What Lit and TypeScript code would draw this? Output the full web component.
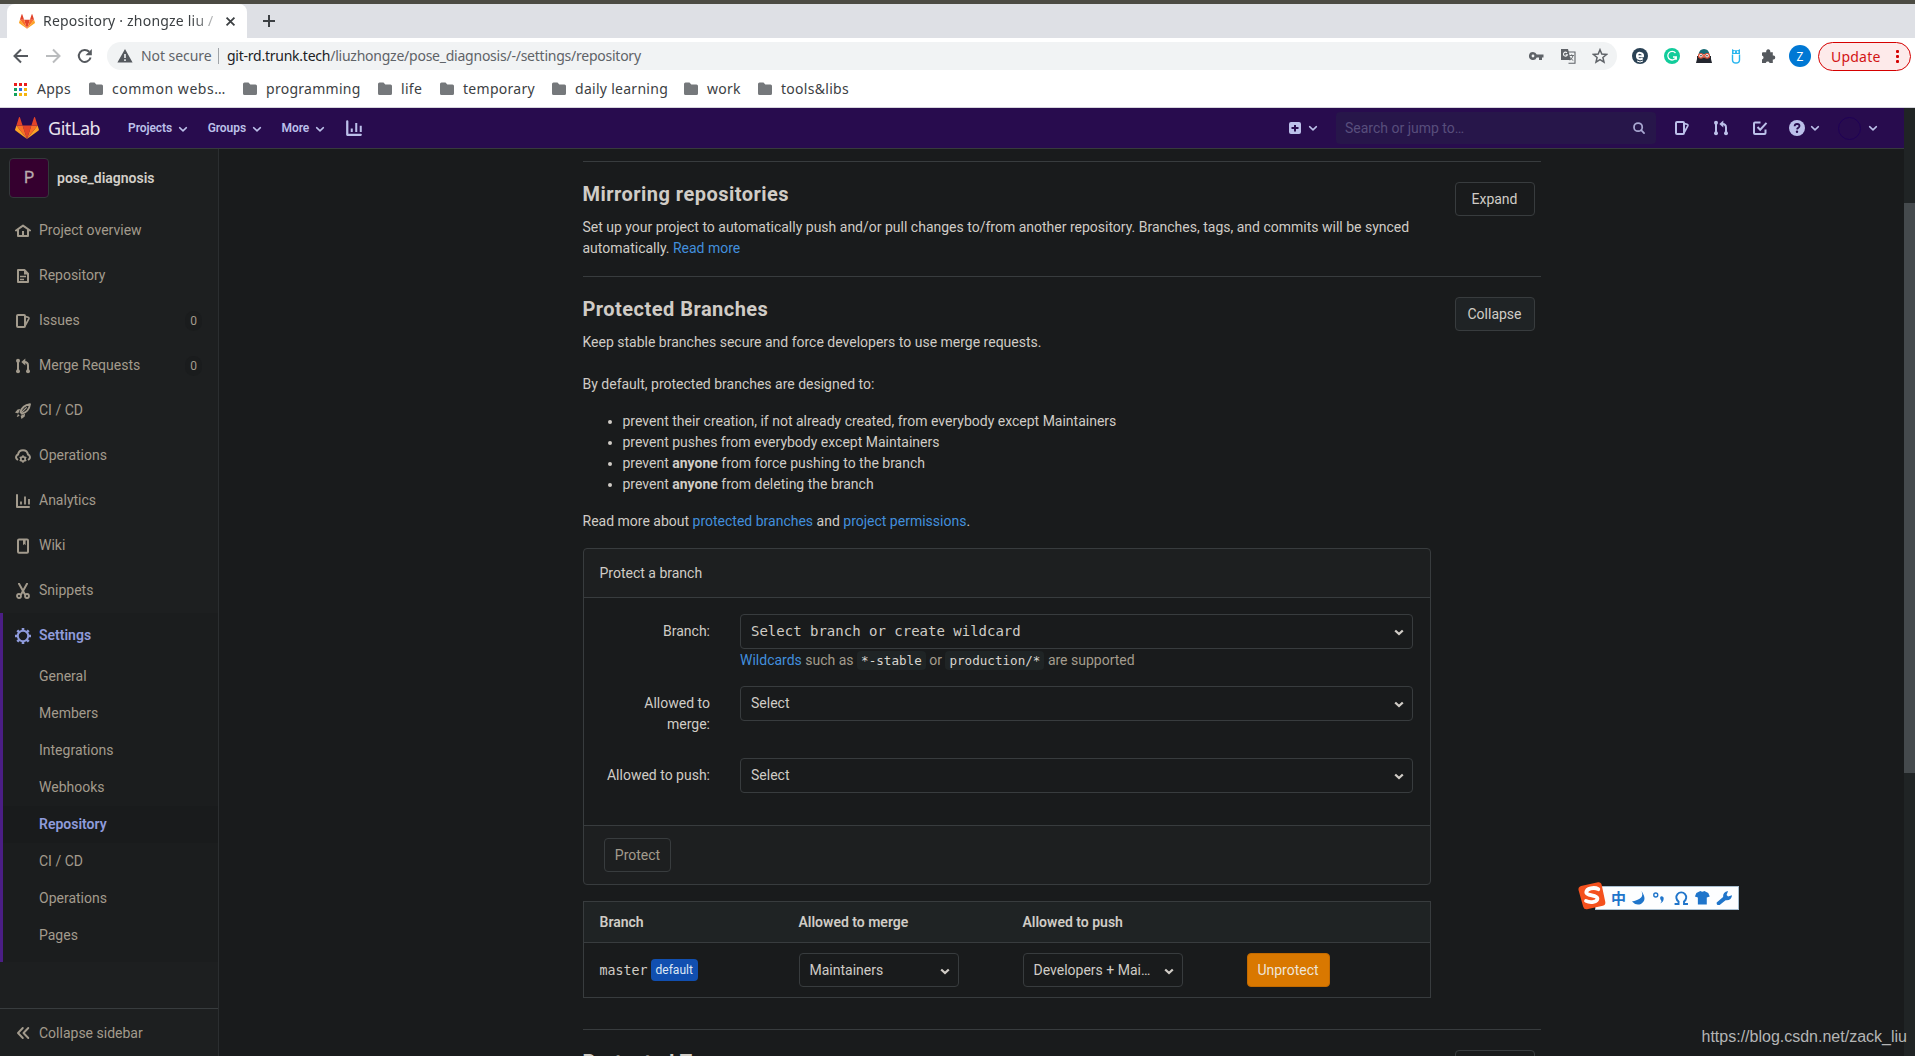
import { LitElement, html, css, svg, nothing, TemplateResult } from "lit";
import { customElement, property } from "lit/decorators.js";
import { classMap } from "lit/directives/class-map.js";

const GLYPHS: Record<string, TemplateResult> = {
  home: svg`<path d="M1 7.5 8 2.6l7 4.9M3 6.8V13h10V6.8" fill="none" stroke="currentColor" stroke-width="2" stroke-linejoin="round" stroke-linecap="round"/><rect x="7" y="8" width="2" height="5" fill="currentColor"/>`,
  doc: svg`<path d="M3 2h6.4L13 5.6V14H3z" fill="none" stroke="currentColor" stroke-width="2" stroke-linejoin="round"/><path d="M9 1.500l5 5H9z" fill="currentColor"/><path d="M5 8.500h6M5 11.500h4" stroke="currentColor" stroke-width="1.400"/>`,
  issues: svg`<path d="M2 3a1 1 0 0 1 1-1h6a1 1 0 0 1 1 1v10a1 1 0 0 1-1 1H3a1 1 0 0 1-1-1z" fill="none" stroke="currentColor" stroke-width="2"/><path d="M10.500 3.600l2.600.7q1.200.4.7 1.500L10.500 12" fill="none" stroke="currentColor" stroke-width="1.700" stroke-linejoin="round"/>`,
  merge: svg`<path d="M3 3v10M13 13V7.500Q13 4 9.500 4H8.500" fill="none" stroke="currentColor" stroke-width="2"/><path d="M10.300.6v6.800L6.300 4z" fill="currentColor"/><circle cx="3" cy="2.800" r="2" fill="currentColor"/><circle cx="3" cy="13.200" r="2" fill="currentColor"/><circle cx="13" cy="13.200" r="2" fill="currentColor"/>`,
  rocket: svg`<path d="M5.500 9.200C6.500 5 10 1.800 15 1.200 14.500 6 11.200 9.800 6.900 10.700z" fill="none" stroke="currentColor" stroke-width="1.900" stroke-linejoin="round"/><path d="M11.700 4.300 6 10" stroke="currentColor" stroke-width="1.200"/><path d="M0 9.500 2.600 6.400l2.600-.4-2 4.500zM6.500 16l3.200-2.600.4-2.700-4.500 2zM3 11l1.700 1.700L2 14l-.2-.2z" fill="currentColor"/>`,
  cloud: svg`<path d="M2.300 11.500A2.800 2.800 0 0 1 3 6.500C3.500 3.700 5.600 2.200 8 2.200s4.500 1.500 5 4.300a2.800 2.800 0 0 1 .7 5" fill="none" stroke="currentColor" stroke-width="2" stroke-linecap="round"/><circle cx="8" cy="11" r="2.200" fill="none" stroke="currentColor" stroke-width="1.700"/><path d="M8 7.200v1.500M8 13.300v1.500M4.700 9.100l1.300.8M10 12.100l1.300.8M4.700 12.900l1.300-.8M10 9.900l1.300-.8" stroke="currentColor" stroke-width="1.500"/>`,
  chart: svg`<path d="M2 2v12h12" fill="none" stroke="currentColor" stroke-width="2" stroke-linecap="round" stroke-linejoin="round"/><path d="M6 8.500v3M10 3.500v8M14 6v5.500" stroke="currentColor" stroke-width="1.800"/>`,
  book: svg`<rect x="3" y="1.500" width="10" height="13.200" rx="1" fill="none" stroke="currentColor" stroke-width="2"/><path d="M8 1h2.600v6.300L9.300 6 8 7.300z" fill="currentColor"/>`,
  scissors: svg`<path d="M4 .8 9.700 11M12 .8 6.300 11" stroke="currentColor" stroke-width="2" stroke-linecap="round"/><circle cx="4" cy="13" r="2" fill="none" stroke="currentColor" stroke-width="1.800"/><circle cx="12" cy="13" r="2" fill="none" stroke="currentColor" stroke-width="1.800"/>`,
  gear: svg`<circle cx="8" cy="8" r="5.200" fill="none" stroke="currentColor" stroke-width="2"/><path d="M8 0v3M8 13v3M0 8h3M13 8h3M2.300 2.300l2 2M11.700 11.700l2 2M2.300 13.700l2-2M11.700 4.300l2-2" stroke="currentColor" stroke-width="2.600"/>`,
  collapse: svg`<path d="M7.800 3 3 8l4.800 5M13.300 3 8.500 8l4.800 5" fill="none" stroke="currentColor" stroke-width="1.900" stroke-linecap="round" stroke-linejoin="round"/>`,
  chevron: svg`<path d="M3.500 6.200 8 10.500l4.500-4.300" fill="none" stroke="currentColor" stroke-width="2" stroke-linecap="round" stroke-linejoin="round"/>`,
  caret: svg`<path d="M4.200 6.500 8 10l3.800-3.500" fill="none" stroke="currentColor" stroke-width="2.300"/>`,
  plus: svg`<path fill-rule="evenodd" d="M4 2h8a2 2 0 0 1 2 2v8a2 2 0 0 1-2 2H4a2 2 0 0 1-2-2V4a2 2 0 0 1 2-2zm3 3v2H4.500v2H7v2.500h2V9h2.500V7H9V5z" fill="currentColor"/>`,
  search: svg`<circle cx="7" cy="7" r="4.700" fill="none" stroke="currentColor" stroke-width="2"/><path d="m10.500 10.500 3.300 3.300" stroke="currentColor" stroke-width="2" stroke-linecap="round"/>`,
  todo: svg`<path d="M8.500 2.500H3a1 1 0 0 0-1 1V13a1 1 0 0 0 1 1h9.500a1 1 0 0 0 1-1V9.500" fill="none" stroke="currentColor" stroke-width="2"/><path d="m5.500 7 2.700 2.700L14.500 2.800" fill="none" stroke="currentColor" stroke-width="2"/>`,
  help: svg`<circle cx="8" cy="8" r="8" fill="currentColor"/><path d="M5.600 6.300C5.700 4.800 6.700 4 8.100 4c1.400 0 2.400.8 2.400 2 0 1.700-2.300 1.800-2.400 3.400" fill="none" stroke="#280c4e" stroke-width="1.800"/><circle cx="8" cy="11.800" r="1.200" fill="#280c4e"/>`,
  back: svg`<path d="M15 8H2M8 1.500 1.500 8 8 14.500" fill="none" stroke="currentColor" stroke-width="2"/>`,
  forward: svg`<path d="M1 8h13M8 1.500 14.500 8 8 14.500" fill="none" stroke="currentColor" stroke-width="2"/>`,
  reload: svg`<path d="M13.600 9.500A6 6 0 1 1 12.200 3.800" fill="none" stroke="currentColor" stroke-width="2"/><path d="M14.800 1v6.300H8.500z" fill="currentColor"/>`,
  warning: svg`<path fill-rule="evenodd" d="M8 1 15.600 14.500H.4zM7.200 6v4h1.600V6zm0 5.200v1.700h1.600v-1.700z" fill="currentColor"/>`,
  folder: svg`<path d="M1 3q0-1.500 1.500-1.500h4L8.300 3.500h5.200Q15 3.500 15 5v7.500q0 1.500-1.500 1.500h-11Q1 14 1 12.500z" fill="currentColor"/>`,
  close: svg`<path d="m3.800 3.800 8.400 8.400M12.200 3.800l-8.400 8.400" stroke="currentColor" stroke-width="1.900"/>`,
  add: svg`<path d="M8 2v12M2 8h12" stroke="currentColor" stroke-width="2"/>`,
  key: svg`<path fill-rule="evenodd" d="M5 4a4 4 0 1 0 3.700 5.400H11V12h3V9.400h1.500V6.600H8.700A4 4 0 0 0 5 4zm0 2.600a1.400 1.400 0 1 1 0 2.800 1.400 1.400 0 0 1 0-2.800z" fill="currentColor"/>`,
  star: svg`<path d="m8 1.700 1.800 4.400 4.700.4-3.600 3 1.100 4.600L8 11.700l-4 2.400 1.100-4.600-3.600-3 4.700-.4z" fill="none" stroke="currentColor" stroke-width="1.500"/>`,
  translate: svg`<path d="M6 4h9v11.300H8.500" fill="none" stroke="currentColor" stroke-width="1.100"/><path d="M1 1h7l2.700 11H1z" fill="currentColor"/><path d="M7 4.800a2 2 0 1 0 .4 2H5.600" fill="none" stroke="#f1f3f4" stroke-width="1.100"/><path d="M9.300 7.500H14M11.700 6.400v1M10 9.300q1 2 3.300 3.200M13 7.600q-.6 2.700-3 4.700" fill="none" stroke="currentColor" stroke-width=".9"/>`,
  puzzle: svg`<path d="M3 4.200h3.300a2.100 2.100 0 1 1 3.900 0h2.600V7.600a2 2 0 1 1 0 3.900V15H9.600a2 2 0 0 0-3.800 0H2v-3.500a2 2 0 0 0 0-3.900V5.200a1 1 0 0 1 1-1z" fill="currentColor"/>`,
};

const icon = (name: string, size = 16) =>
  html`<svg class="icon" width=${size} height=${size} viewBox="0 0 16 16" aria-hidden="true">${GLYPHS[name]}</svg>`;

const tanuki = (w: number, h: number) => html`<svg class="icon" width=${w} height=${h} viewBox="0 0 24 22">
  <path d="M12 22 16.400 8.400H7.600z" fill="#e24329"/>
  <path d="M12 22 7.600 8.400H1.400zM12 22l4.400-13.600h6.200z" fill="#fc6d26"/>
  <path d="M1.400 8.400.1 12.500a.9.9 0 0 0 .3 1L12 22zM22.600 8.400l1.300 4.100a.9.9 0 0 1-.3 1L12 22z" fill="#fca326"/>
  <path d="M1.400 8.400h6.200L4.900.3a.5.5 0 0 0-.9 0zM22.600 8.400h-6.200L19.100.3a.5.5 0 0 1 .9 0z" fill="#e24329"/>
</svg>`;

const base = css`
  * { box-sizing: border-box; }
  .icon { display: block; flex: none; }
`;

@customElement("browser-chrome")
class BrowserChrome extends LitElement {
  static styles = [base, css`
    :host { display: block; height: 108px; background: #fff; color: #3c4043; font: 14px "Noto Sans", sans-serif; border-bottom: 1px solid #d6d5dc; }
    .edge { height: 4px; background: #4c4b43; }
    .tabs { height: 34px; background: #dee0e5; display: flex; align-items: center; padding-left: 7px; }
    .tab { width: 240px; height: 34px; background: #fff; border-radius: 8px 8px 0 0; display: flex; align-items: center; padding-left: 12px; }
    .title { width: 172px; margin-left: 8px; white-space: nowrap; overflow: hidden; font-size: 14px; letter-spacing: 0.200px; line-height: 20px; -webkit-mask-image: linear-gradient(90deg, #000 148px, transparent 182px); mask-image: linear-gradient(90deg, #000 148px, transparent 182px); }
    .x { margin-left: 8px; }
    .new { margin-left: 14px; }
    .bar { height: 36px; display: flex; align-items: center; padding: 0 4px 0 13px; color: #55595e; }
    .nav { display: flex; gap: 16px; width: 94px; }
    .fwd { color: #babcbe; }
    .omni { width: 1511px; height: 28px; border-radius: 14px; background: #f1f3f4; display: flex; align-items: center; padding: 0 9px 0 10px; white-space: nowrap; }
    .secure { margin: 0 0 2px 8px; width: 77px; color: #5f6368; letter-spacing: -0.050px; }
    .rule { width: 1px; height: 16px; background: #a0a4a8; margin-right: 8px; }
    .url { flex: 1; color: #5f6368; letter-spacing: -0.240px; margin-bottom: 2px; }
    .host { color: #202124; }
    .acts { display: flex; gap: 16px; color: #5f6368; }
    .exts { display: flex; align-items: center; gap: 16px; margin-left: 15px; }
    .avatar { width: 22px; height: 22px; border-radius: 50%; background: #0078d4; color: #fff; display: grid; place-items: center; font-size: 12px; margin-left: -3px; }
    .update { margin-left: 7px; width: 93px; height: 29px; border: 1px solid #d50000; border-radius: 15px; background: #fdeaea; color: #d21414; display: flex; align-items: center; padding-left: 12px; gap: 15px; letter-spacing: 0.200px; }
    .dots { display: grid; gap: 2px; }
    .dot { width: 3px; height: 3px; border-radius: 1px; background: #d50000; }
    .marks { height: 32px; margin-top: -1px; display: flex; align-items: center; padding-left: 14px; color: #3c4043; }
    .apps { width: 75px; display: flex; align-items: center; gap: 10px; }
    .grid { width: 13px; display: grid; grid-template-columns: repeat(3, 3px); gap: 2px; }
    .sq { height: 3px; }
    .red { background: #ea1c1c; } .green { background: #12a15c; } .blue { background: #2f6fe0; } .amber { background: #f5b50f; }
    .mark { display: flex; align-items: center; gap: 8px; white-space: nowrap; color: #75787b; margin-left: -1px; margin-right: 1px; }
    .label { color: #3c4043; letter-spacing: 0.280px; margin-bottom: 2px; }
    .label.wide { letter-spacing: 0.530px; }
  `];
  marks: [string, number][] = [
    ["common webs…", 154], ["programming", 135], ["life", 62], ["temporary", 112],
    ["daily learning", 132], ["work", 74], ["tools&libs", 92],
  ];
  render() {
    const colors = ["red", "red", "red", "green", "blue", "amber", "green", "amber", "amber"];
    return html`
      <div class="edge"></div>
      <div class="tabs">
        <div class="tab">${tanuki(16, 15)}<span class="title">Repository · zhongze liu / </span><span class="x">${icon("close", 15)}</span></div>
        <span class="new">${icon("add", 16)}</span>
      </div>
      <div class="bar">
        <div class="nav">${icon("back")}<span class="fwd">${icon("forward")}</span>${icon("reload")}</div>
        <div class="omni">
          ${icon("warning")}<span class="secure">Not secure</span><span class="rule"></span>
          <span class="url"><span class="host">git-rd.trunk.tech</span>/liuzhongze/pose_diagnosis/-/settings/repository</span>
          <div class="acts">${icon("key")}${icon("translate")}${icon("star")}</div>
        </div>
        <div class="exts">
          <svg class="icon" width="16" height="16" viewBox="0 0 16 16"><circle cx="8" cy="8" r="8" fill="#2b4255"/><path d="M4.800 8.300h6.200A3 3 0 0 0 5 7.500C4.700 11 8 12 10.700 10.300" fill="none" stroke="#fff" stroke-width="2"/><path d="M5 13q3 2 6 0" stroke="#fff" fill="none"/></svg>
          <svg class="icon" width="16" height="16" viewBox="0 0 16 16"><circle cx="8" cy="8" r="8" fill="#11cc9b"/><path d="M11.500 5A4.300 4.300 0 1 0 12.200 9H9M12.300 9v2.800" fill="none" stroke="#fff" stroke-width="1.300"/></svg>
          <svg class="icon" width="16" height="16" viewBox="0 0 16 16"><path d="M2.500 7Q3 1 8 1t5.500 6z" fill="#176a74"/><path d="M1 8h14v3l1 4H0l1-4z" fill="#23262e"/><path d="M2.500 6h11v3.500h-11z" fill="#f3af9b"/><circle cx="4.900" cy="7.800" r="2.300" fill="#fff" stroke="#d94c32" stroke-width="1.200"/><circle cx="11.100" cy="7.800" r="2.300" fill="#fff" stroke="#d94c32" stroke-width="1.200"/><circle cx="5" cy="7.800" r=".8" fill="#222"/><circle cx="11" cy="7.800" r=".8" fill="#222"/></svg>
          <svg class="icon" width="16" height="16" viewBox="0 0 16 16"><path d="M4.500 6.500V12Q4.500 15 8 15t3.500-3V6.500" fill="none" stroke="#27b5ee" stroke-width="1.400"/><path d="M4 1l2 1.200h4L12 1v5H4z" fill="#27b5ee"/><circle cx="6.300" cy="4" r=".9" fill="#fff"/><circle cx="9.700" cy="4" r=".9" fill="#fff"/></svg>
          <span>${icon("puzzle")}</span>
          <span class="avatar">Z</span>
        </div>
        <div class="update">Update<span class="dots"><span class="dot"></span><span class="dot"></span><span class="dot"></span></span></div>
      </div>
      <div class="marks">
        <div class="apps"><span class="grid">${colors.map((c) => html`<span class="sq ${c}"></span>`)}</span><span class="label">Apps</span></div>
        ${this.marks.map(([t, w], i) => html`<div class="mark" style="width:${w}px">${icon("folder")}<span class=${classMap({ label: true, wide: i === 0 })}>${t}</span></div>`)}
      </div>`;
  }
}

@customElement("top-nav")
class TopNav extends LitElement {
  static styles = [base, css`
    :host { display: flex; align-items: center; height: 41px; background: #280c4e; border-bottom: 1px solid #373b3d; padding-left: 15px; color: #bcc0ea; font: 14px Roboto, sans-serif; }
    .brand { font: 18px/24px "Noto Sans", sans-serif; letter-spacing: -0.450px; color: #e8e4ee; margin-left: 9px; width: 80px; }
    .menu { display: flex; align-items: center; gap: 5px; font-size: 12px; font-weight: 600; margin-right: 18.500px; letter-spacing: -0.060px; }
    .menu svg { margin-top: 1px; }
    .plus { margin-left: auto; width: 49px; display: flex; align-items: center; gap: 4px; }
    .search { width: 320px; height: 32px; border-radius: 4px; background: #27164a; color: #584e7c; display: flex; align-items: center; justify-content: space-between; padding: 0 10px 0 9px; }
    .search svg { color: #a9a8d2; }
    .right { width: 248px; display: flex; align-items: center; padding-left: 18px; }
    .cell { width: 39px; }
    .cell.todo { width: 37px; }
    .help { display: flex; align-items: center; gap: 4px; width: 49px; }
    .user { display: flex; align-items: center; gap: 6px; }
    .ring { width: 23px; height: 23px; border-radius: 50%; border: 1px solid #1f0056; }
  `];
  render() {
    return html`
      ${tanuki(24, 22)}<span class="brand">GitLab</span>
      ${["Projects", "Groups", "More"].map((m) => html`<span class="menu">${m}${icon("chevron", 12)}</span>`)}
      <span>${icon("chart", 18)}</span>
      <span class="plus">${icon("plus")}${icon("chevron", 12)}</span>
      <div class="search"><span>Search or jump to…</span>${icon("search", 14)}</div>
      <div class="right">
        <span class="cell">${icon("issues")}</span><span class="cell">${icon("merge")}</span><span class="cell todo">${icon("todo")}</span>
        <span class="help">${icon("help")}${icon("chevron", 12)}</span>
        <span class="user"><span class="ring"></span>${icon("chevron", 12)}</span>
      </div>`;
  }
}

@customElement("side-nav")
class SideNav extends LitElement {
  static styles = [base, css`
    :host { display: flex; flex-direction: column; width: 219px; flex: none; background: #1d1f20; border-right: 1px solid #2b2e30; font: 14px Roboto, sans-serif; color: #a39b8d; }
    .project { height: 59px; display: flex; align-items: flex-start; padding: 9px 0 0 9px; gap: 8px; color: #d3cfc9; font-weight: 600; line-height: 40px; }
    .tile { width: 40px; height: 40px; border: 1px solid #33383a; border-radius: 4px; background: #35002f; color: #b9aeae; text-align: center; font-size: 16px; font-weight: 400; line-height: 37px; -webkit-text-stroke: 0.300px; }
    .row { height: 45px; display: flex; align-items: center; padding: 0 16px 0 15px; gap: 8px; }
    .row svg { margin-top: 1px; }
    .name { margin-bottom: 1px; }
    .row .count { margin-left: auto; width: 17px; height: 20px; border-radius: 9px; background: #1a1c1d; font-size: 12px; line-height: 20px; text-align: center; }
    .open { border-left: 3px solid #4b1e85; background: #1b1d1e; padding-bottom: 8px; }
    .open .row { padding-left: 12px; }
    .on { color: #8f9bdb; font-weight: 600; }
    .sub { height: 37px; line-height: 37px; padding-left: 36px; }
    .sub.on { background: #191b1c; }
    .foot { margin-top: auto; height: 48px; border-top: 1px solid #383c3e; }
    .foot .row { height: 47px; }
  `];
  rows: [string, string, boolean][] = [
    ["home", "Project overview", false], ["doc", "Repository", false], ["issues", "Issues", true], ["merge", "Merge Requests", true],
    ["rocket", "CI / CD", false], ["cloud", "Operations", false], ["chart", "Analytics", false], ["book", "Wiki", false], ["scissors", "Snippets", false],
  ];
  render() {
    const subs = ["General", "Members", "Integrations", "Webhooks", "Repository", "CI / CD", "Operations", "Pages"];
    return html`
      <div class="project"><span class="tile">P</span>pose_diagnosis</div>
      ${this.rows.map(([g, t, n]) => html`<div class="row">${icon(g)}<span class="name">${t}</span>${n ? html`<span class="count">0</span>` : nothing}</div>`)}
      <div class="open">
        <div class="row on">${icon("gear")}<span class="name">Settings</span></div>
        ${subs.map((s) => html`<div class=${classMap({ sub: true, on: s === "Repository" })}>${s}</div>`)}
      </div>
      <div class="foot"><div class="row">${icon("collapse")}<span>Collapse sidebar</span></div></div>`;
  }
}

@customElement("drop-select")
class DropSelect extends LitElement {
  @property() label = "";
  static styles = [base, css`
    :host { display: flex; align-items: center; justify-content: space-between; border: 1px solid #383c3e; border-radius: 4px; background: #191b1c; padding: 0 5px 0 10px; color: #d0ccc6; }
    svg { margin-top: 1px; }
  `];
  render() {
    return html`<span>${this.label}</span>${icon("caret")}`;
  }
}

@customElement("settings-page")
class SettingsPage extends LitElement {
  static styles = [base, css`
    :host { display: block; flex: 1; overflow: hidden; background: #191b1c; color: #d0ccc6; font: 14px/21px Roboto, sans-serif; padding: 12px 0 0 363.500px; }
    .section { width: 958px; border-top: 1px solid #383c3e; padding: 20px 6px 17px 0; display: grid; grid-template-columns: 848px 80px; justify-content: space-between; }
    .section.last { height: 60px; }
    .section.main { padding-bottom: 31px; }
    h4 { margin: 0 0 11px; font-size: 20px; line-height: 24px; font-weight: 700; letter-spacing: 0.470px; }
    p { margin: 0; }
    .gap { margin-top: 21px; }
    a { color: #428fdc; text-decoration: none; }
    ul { margin: 16px 0; padding-left: 40px; }
    b { font-weight: 700; }
    .btn { height: 34px; border: 1px solid #383c3e; border-radius: 4px; display: grid; place-items: center; line-height: 20px; }
    .btn.pressed { background: #1f2325; }
    .card { margin-top: 16px; border: 1px solid #383c3e; border-radius: 4px; background: #1d1f20; height: 337px; display: flex; flex-direction: column; }
    .head { height: 49px; flex: none; padding: 14px 16px 13px; border-bottom: 1px solid #383c3e; }
    .form { flex: 1; min-height: 0; background: #191b1c; padding: 16px 17px 0 16.500px; }
    .field { height: 72px; display: grid; grid-template-columns: 110px 1fr; column-gap: 30px; }
    .name { text-align: right; padding-top: 6.500px; }
    .field drop-select { height: 35px; }
    .hint { color: #a39b8d; margin-top: 1px; }
    .mono { font-family: "DejaVu Sans Mono", monospace; }
    code { font: 12.600px "DejaVu Sans Mono", monospace; background: #1f2425; color: #d9d5cf; padding: 2px 4px; border-radius: 4px; }
    .foot { height: 59px; flex: none; border-top: 1px solid #383c3e; padding: 12px 20.500px; }
    .foot .btn { width: 67px; color: #a39b8d; }
    .table { margin-top: 16px; border: 1px solid #383c3e; }
    .tr { display: grid; grid-template-columns: 199px 224px 224px 1fr; padding-left: 16px; align-items: center; height: 54px; }
    .tr.th { height: 41px; background: #1f2324; border-bottom: 1px solid #383c3e; font-weight: 600; }
    .tr drop-select { width: 160px; height: 34px; }
    .branch { display: flex; align-items: center; gap: 3px; }
    .branch .mono { font-size: 13.300px; }
    .badge { font: 12px/22px Roboto, sans-serif; background: #114fb0; color: #dfe8f5; border-radius: 4px; padding: 0 5px; }
    .warn { width: 83px; background: #d97800; border-color: #c26a00; color: #eee5da; }
  `];
  render() {
    return html`
      <div class="section">
        <div><h4>Mirroring repositories</h4>
          <p>Set up your project to automatically push and/or pull changes to/from another repository. Branches, tags, and commits will be synced automatically. <a>Read more</a></p></div>
        <div class="btn">Expand</div>
      </div>
      <div class="section main">
        <div>
          <h4>Protected Branches</h4>
          <p>Keep stable branches secure and force developers to use merge requests.</p>
          <p class="gap">By default, protected branches are designed to:</p>
          <ul>
            <li>prevent their creation, if not already created, from everybody except Maintainers</li>
            <li>prevent pushes from everybody except Maintainers</li>
            <li>prevent <b>anyone</b> from force pushing to the branch</li>
            <li>prevent <b>anyone</b> from deleting the branch</li>
          </ul>
          <p>Read more about <a>protected branches</a> and <a>project permissions</a>.</p>
          <div class="card">
            <div class="head">Protect a branch</div>
            <div class="form">
              <div class="field"><span class="name">Branch:</span><div><drop-select class="mono" label="Select branch or create wildcard"></drop-select>
                <div class="hint"><a>Wildcards</a> such as <code>*-stable</code> or <code>production/*</code> are supported</div></div></div>
              <div class="field"><span class="name">Allowed to<br>merge:</span><drop-select label="Select"></drop-select></div>
              <div class="field"><span class="name">Allowed to push:</span><drop-select label="Select"></drop-select></div>
            </div>
            <div class="foot"><div class="btn">Protect</div></div>
          </div>
          <div class="table">
            <div class="tr th"><span>Branch</span><span>Allowed to merge</span><span>Allowed to push</span></div>
            <div class="tr">
              <span class="branch"><span class="mono">master</span><span class="badge">default</span></span>
              <drop-select label="Maintainers"></drop-select>
              <drop-select label="Developers + Mai…"></drop-select>
              <span class="btn warn">Unprotect</span>
            </div>
          </div>
        </div>
        <div class="btn pressed">Collapse</div>
      </div>
      <div class="section last"><h4>Protected Tags</h4><div class="btn">Expand</div></div>`;
  }
}

@customElement("app-root")
class AppRoot extends LitElement {
  static styles = [base, css`
    :host { display: block; position: relative; width: 1915px; height: 1056px; overflow: hidden; background: #191b1c; }
    .view { display: flex; height: 948px; }
    .app { width: 1904px; display: flex; flex-direction: column; }
    .body { flex: 1; display: flex; min-height: 0; }
    .track { width: 11px; background: #202425; padding-top: 95px; }
    .thumb { height: 570px; background: #454a4d; }
    .ime { position: absolute; left: 1578px; top: 881px; display: flex; align-items: center; }
    .tray { width: 144px; height: 24px; margin: 4px 0 0 -12px; background: #fdfeff; border: 1px solid #a9bfd0; display: flex; align-items: center; padding-left: 15px; }
    .logo { z-index: 1; }
    .zh { font: 700 15px/22px "Noto Sans CJK SC", sans-serif; color: #1f75cb; width: 20px; }
    .mark { position: absolute; left: 1701.500px; top: 1027px; font: 16px/20px "Liberation Sans", Arial, sans-serif; color: #b4b5b5; white-space: nowrap; }
  `];
  render() {
    return html`
      <browser-chrome></browser-chrome>
      <div class="view">
        <div class="app"><top-nav></top-nav><div class="body"><side-nav></side-nav><settings-page></settings-page></div></div>
        <div class="track"><div class="thumb"></div></div>
      </div>
      <div class="ime">
        <svg class="icon logo" width="29" height="29" viewBox="0 0 29 29"><path d="M3 5 20 1.200Q23 .8 23.700 4L27.300 21q.5 3-2.500 3.800L9 28.300q-3 .4-3.800-2.500L.5 9Q0 6 3 5z" fill="#f4511e"/><path d="M20.300 8.200C16 5.700 8.500 7.500 8.300 11.200c-.1 4 11 2.200 11.100 6.200.1 3.700-7 4.700-11.400 2.500" fill="none" stroke="#fff" stroke-width="3.800" stroke-linecap="round"/></svg>
        <div class="tray">
          <span class="zh">中</span>
          <svg class="icon" width="105" height="18" viewBox="0 0 106 18" fill="#1f75cb"><path d="M10.500 2Q14.500 10 1 12.500 5 17 10 15 17 11 10.500 2z"/><circle cx="25" cy="6" r="2" fill="none" stroke="#1f75cb" stroke-width="1.400"/><path d="M29.500 8a2 2 0 0 1 3.500 1.500Q33 13 29.500 14.500 31.500 12.500 30.500 11.500 29 10.500 29.500 8z"/><path d="M44 15h4v-2.500a5 5 0 1 1 5.500 0V15h4" fill="none" stroke="#1f75cb" stroke-width="1.900"/><path d="M66 4l4-2q2 1.500 4 0l4 2 1.500 3.500-3 1V15.500h-9V8.500l-3-1z"/><path d="M86.500 13.500 93 8q-.5-5 5-6l-1.500 4 1.500 1.500 4-1.200q-.5 5.500-6.500 5L89.500 16q-3.500.5-3-2.500z"/></svg>
        </div>
      </div>
      <div class="mark">https://blog.csdn.net/zack_liu</div>`;
  }
}
